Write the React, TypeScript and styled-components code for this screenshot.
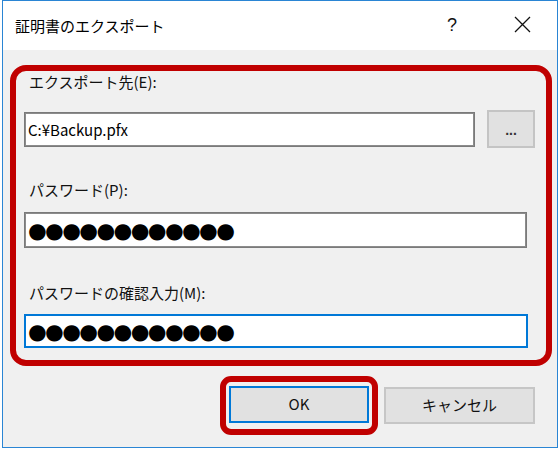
import React from "react";
import styled, { createGlobalStyle } from "styled-components";

const Global = createGlobalStyle`
  html, body { margin: 0; padding: 0; background: #ffffff; }
  body { font-family: "Noto Sans CJK JP", "Noto Sans", sans-serif; color: #000; }
  * { box-sizing: border-box; }
`;

const Window = styled.div`
  margin-left: 2px;
  width: 556px;
  height: 448px;
  border: 1px solid #2a85d4;
  display: flex;
  flex-direction: column;
  background: #f0f0f0;
`;

const TitleBar = styled.div`
  height: 49px;
  background: #ffffff;
  display: flex;
  align-items: center;
  padding-left: 12px;
  padding-right: 26px;
`;

const Title = styled.div`
  flex: 1;
  font-size: 15px;
  line-height: 20px;
  color: #000;
`;

const Help = styled.div`
  font-family: "Liberation Sans", Arial, sans-serif;
  font-size: 18px;
  line-height: 20px;
  margin-right: 57px;
  margin-top: -2px;
  color: #111;
`;

const CloseIcon = styled.svg`
  width: 17px;
  height: 17px;
  margin-top: -2px;
  display: block;
`;

const Body = styled.div`
  flex: 1;
  display: flex;
  flex-direction: column;
`;

const Highlight = styled.div`
  border: 6px solid #c00000;
  border-radius: 16px;
  margin: 15px 5px 0 7px;
  height: 301px;
  padding: 1px 0 0 8px;
  display: flex;
  flex-direction: column;
`;

const Label = styled.div<{ $gap: number }>`
  font-size: 15px;
  line-height: 20px;
  margin-left: 5px;
  margin-top: ${(p) => p.$gap}px;
  color: #111;
`;

const Row = styled.div`
  display: flex;
  align-items: center;
  gap: 12px;
  margin-top: 18px;
`;

const Field = styled.div<{ $w: number; $h: number; $focus?: boolean; $gap?: number }>`
  width: ${(p) => p.$w}px;
  height: ${(p) => p.$h}px;
  margin-top: ${(p) => p.$gap ?? 0}px;
  background: #ffffff;
  border: 1px solid ${(p) => (p.$focus ? "#0078d7" : "#7a7a7a")};
  box-shadow: inset 0 0 0 1px ${(p) => (p.$focus ? "#0078d7" : "#8c8c8c")};
  display: flex;
  align-items: center;
  padding-left: 3px;
  font-size: 15px;
  white-space: nowrap;
  overflow: hidden;
`;

const Dots = styled.span`
  font-family: "DejaVu Sans", sans-serif;
  font-size: 21.5px;
  letter-spacing: -1.65px;
  line-height: 1;
  color: #000;
  margin-top: 1px;
`;

const Browse = styled.div`
  width: 48px;
  height: 38px;
  background: #e1e1e1;
  border: 2px solid #c4c4c4;
  display: flex;
  align-items: center;
  justify-content: center;
  font-family: "Liberation Sans", Arial, sans-serif;
  font-size: 14px;
  font-weight: bold;
  color: #333;
  padding-top: 2px;
`;

const Footer = styled.div`
  display: flex;
  justify-content: flex-end;
  align-items: center;
  gap: 6px;
  margin-top: 10px;
  padding-right: 22px;
`;

const FocusRing = styled.div`
  border: 6px solid #c00000;
  border-radius: 11px;
  padding: 4px 3px 6px 3px;
`;

const Button = styled.div<{ $w: number; $default?: boolean }>`
  width: ${(p) => p.$w}px;
  height: 37px;
  background: #e1e1e1;
  border: ${(p) => (p.$default ? "2px solid #0078d7" : "2px solid #c6c6c6")};
  display: flex;
  align-items: center;
  justify-content: center;
  font-size: 15px;
  color: #111;
  padding-bottom: 2px;
`;

export default function App() {
  return (
    <>
      <Global />
      <Window>
        <TitleBar>
          <Title>証明書のエクスポート</Title>
          <Help>?</Help>
          <CloseIcon viewBox="0 0 17 17">
            <path d="M1 1 L16 16 M16 1 L1 16" stroke="#111" strokeWidth="1.3" fill="none" />
          </CloseIcon>
        </TitleBar>
        <Body>
          <Highlight>
            <Label $gap={0}>エクスポート先(E):</Label>
            <Row>
              <Field $w={451} $h={35}>C:¥Backup.pfx</Field>
              <Browse>...</Browse>
            </Row>
            <Label $gap={32}>パスワード(P):</Label>
            <Field $w={503} $h={36} $gap={12}>
              <Dots>●●●●●●●●●●●●</Dots>
            </Field>
            <Label $gap={35}>パスワードの確認入力(M):</Label>
            <Field $w={504} $h={34} $gap={11} $focus>
              <Dots>●●●●●●●●●●●●</Dots>
            </Field>
          </Highlight>
          <Footer>
            <FocusRing>
              <Button $w={140} $default>OK</Button>
            </FocusRing>
            <Button $w={151}>キャンセル</Button>
          </Footer>
        </Body>
      </Window>
    </>
  );
}
